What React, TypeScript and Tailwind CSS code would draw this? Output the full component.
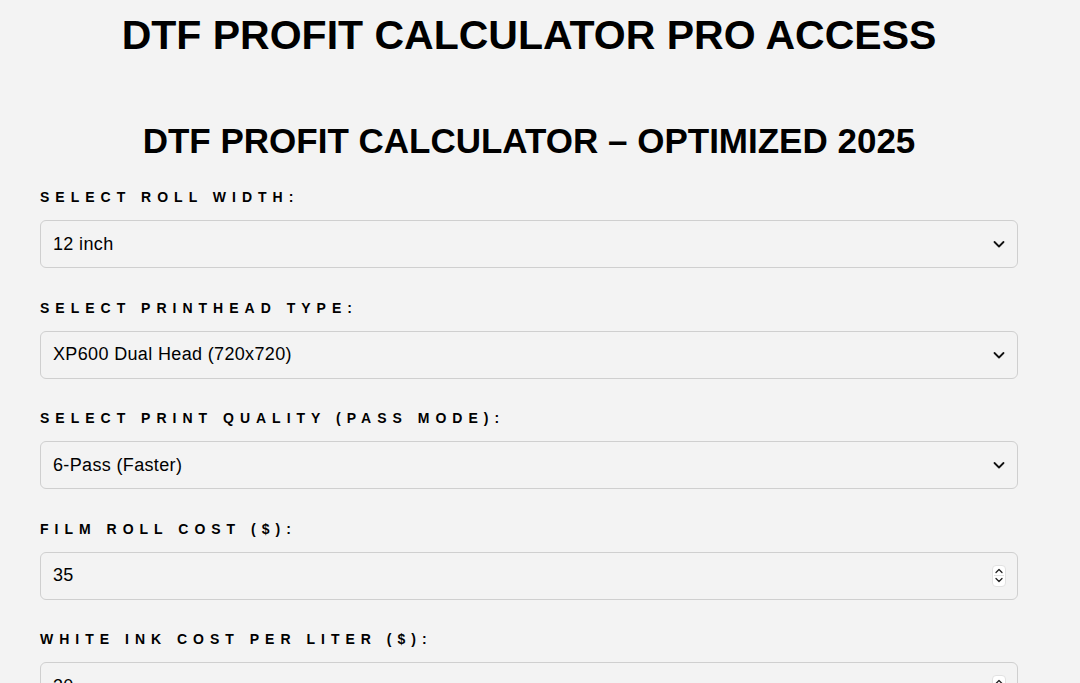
import React from 'react';

function Chevron() {
  return (
    <svg width="14" height="14" viewBox="0 0 14 14" fill="none" className="pointer-events-none absolute right-[12px] top-1/2 -translate-y-1/2">
      <path d="M2.5 5l4.5 4.5L11.5 5" stroke="#111" strokeWidth="1.8" strokeLinecap="round" strokeLinejoin="round" />
    </svg>
  );
}

function Spinner() {
  return (
    <div className="pointer-events-none absolute right-[12px] top-1/2 -translate-y-1/2 w-[14px] h-[22px] rounded-[4px] bg-white border border-[#e2e2e2] flex flex-col items-center justify-center gap-[1px]">
      <svg width="8" height="6" viewBox="0 0 8 6" fill="none">
        <path d="M1 4.5L4 1.5l3 3" stroke="#222" strokeWidth="1.3" strokeLinecap="round" strokeLinejoin="round" />
      </svg>
      <div className="w-[10px] h-px bg-[#e2e2e2]" />
      <svg width="8" height="6" viewBox="0 0 8 6" fill="none">
        <path d="M1 1.5L4 4.5l3-3" stroke="#222" strokeWidth="1.3" strokeLinecap="round" strokeLinejoin="round" />
      </svg>
    </div>
  );
}

function Field({ label, children }: { label: string; children: React.ReactNode }) {
  return (
    <div className="flex flex-col">
      <label className="text-[14px] leading-[20px] font-bold uppercase tracking-[6px] text-black mb-[13px]">{label}</label>
      {children}
    </div>
  );
}

function SelectBox({ value, options }: { value: string; options: string[] }) {
  return (
    <div className="relative">
      <select
        defaultValue={value}
        className="appearance-none w-full h-[48px] rounded-[6px] border border-[#cfcfcf] bg-[#f3f3f3] px-[12px] text-[18px] tracking-[0.35px] text-black outline-none"
      >
        {options.map((o) => (
          <option key={o}>{o}</option>
        ))}
      </select>
      <Chevron />
    </div>
  );
}

function NumberBox({ value }: { value: string }) {
  return (
    <div className="relative">
      <input
        type="text"
        defaultValue={value}
        className="w-full h-[48px] rounded-[6px] border border-[#cfcfcf] bg-[#f3f3f3] px-[12px] text-[18px] tracking-[0.35px] text-black outline-none"
      />
      <Spinner />
    </div>
  );
}

export default function App() {
  return (
    <div className="bg-[#f3f3f3] font-['Liberation_Sans',Arial,sans-serif] text-black overflow-hidden h-[683px]">
      <div className="w-[978px] ml-[40px] flex flex-col">
        <h1 className="pt-[11px] text-[41px] leading-[1.2] font-bold text-center">DTF PROFIT CALCULATOR PRO ACCESS</h1>
        <h2 className="mt-[60px] text-[35px] leading-[1.2] font-bold text-center">DTF PROFIT CALCULATOR – OPTIMIZED 2025</h2>
        <div className="mt-[25px] flex flex-col gap-[29.5px]">
          <Field label="Select Roll Width:">
            <SelectBox value="12 inch" options={['12 inch', '24 inch']} />
          </Field>
          <Field label="Select Printhead Type:">
            <SelectBox value="XP600 Dual Head (720x720)" options={['XP600 Dual Head (720x720)', 'i3200 Dual Head']} />
          </Field>
          <Field label="Select Print Quality (Pass Mode):">
            <SelectBox value="6-Pass (Faster)" options={['6-Pass (Faster)', '8-Pass (Quality)']} />
          </Field>
          <Field label="Film Roll Cost ($):">
            <NumberBox value="35" />
          </Field>
          <Field label="White Ink Cost Per Liter ($):">
            <NumberBox value="30" />
          </Field>
        </div>
      </div>
    </div>
  );
}
